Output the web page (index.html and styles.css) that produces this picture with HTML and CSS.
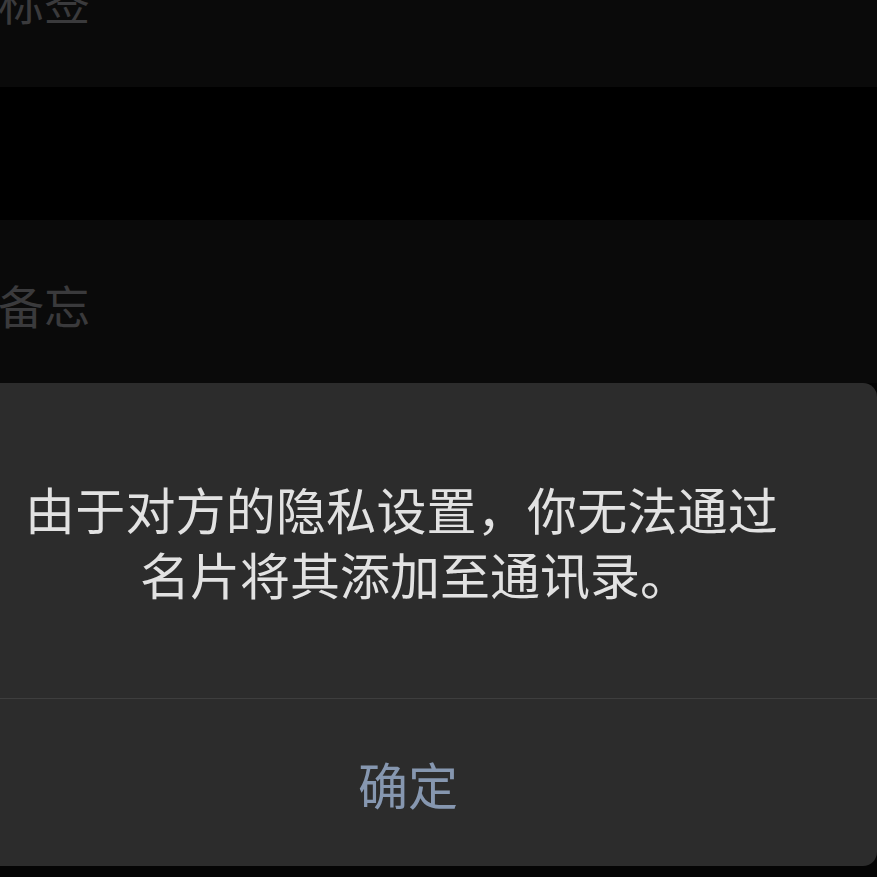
FILE: index.html
```html
<!DOCTYPE html>
<html lang="zh-CN">
<head>
  <title>名片</title>
  <meta charset="UTF-8">
  <meta name="viewport" content="width=device-width, initial-scale=1">
  <link rel="stylesheet" href="styles.css">
</head>
<body>
  <div class="screen">
    <div class="row row-tag">
      <span class="row-label">标签</span>
    </div>
    <div class="spacer"></div>
    <div class="row row-memo">
      <span class="row-label">备忘</span>
    </div>

    <div class="dialog">
      <div class="dialog-message">
        <p>
          <span class="line line-first">由于对方的隐私设置，你无法通过</span>
          <span class="line line-second">名片将其添加至通讯录。</span>
        </p>
      </div>
      <div class="dialog-action">确定</div>
    </div>
  </div>
</body>
</html>
```

FILE: styles.css
```css
:root {
  --bg: #000;
  --row: #0a0a0a;
  --muted: #3a3a3c;
  --card: #2c2c2c;
  --line: #3e3e3e;
  --text: #e2e2e2;
  --accent: #8697b0;
}

body {
  margin: 0;
  background: var(--bg);
  font-family: "Noto Sans CJK SC", "Noto Sans", sans-serif;
  overflow: hidden;
}

.screen {
  width: 877px;
  height: 877px;
  overflow: hidden;
  background: #050505;
}

.row {
  background: var(--row);
  display: flex;
  align-items: flex-start;
}

.row-label {
  font-size: 46px;
  line-height: 46px;
  color: var(--muted);
  margin-left: -2px;
}

.row-tag {
  height: 87px;
}

.row-tag .row-label {
  margin-top: -23px;
}

.spacer {
  height: 133px;
  background: #000;
}

.row-memo {
  height: 163px;
}

.row-memo .row-label {
  margin-top: 61px;
}

.dialog {
  width: 943px;
  height: 483px;
  margin-left: -66px;
  background: var(--card);
  border-radius: 14px;
  display: flex;
  flex-direction: column;
}

.dialog-message {
  height: 315px;
  border-bottom: 1px solid var(--line);
  display: flex;
  align-items: center;
  justify-content: center;
}

.dialog-message p {
  margin: 0;
  font-size: 50px;
  line-height: 65px;
  color: var(--text);
  text-align: center;
  width: 100%;
}

.line {
  display: block;
  white-space: nowrap;
}

.line-first {
  padding-right: 8px;
  letter-spacing: 0.2px;
}

.line-second {
  padding-left: 19px;
}

.dialog-action {
  flex: 1;
  display: flex;
  align-items: center;
  justify-content: center;
  padding-left: 5px;
  font-size: 50px;
  color: var(--accent);
}
```
